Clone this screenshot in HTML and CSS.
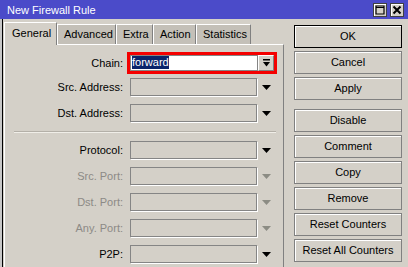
FILE: index.html
```html
<!DOCTYPE html>
<html lang="en">
<head>
    <meta charset="UTF-8">
    <title>New Firewall Rule</title>
    <link rel="stylesheet" href="styles.css">
</head>
<body>
<div class="window">
    <div class="titlebar">
        <span class="title">New Firewall Rule</span>
        <span class="tb-btn">
            <svg width="10" height="10" viewBox="0 0 10 10"><path d="M1 1h8v8h-8z M1 2.5h8" fill="none" stroke="#000" stroke-width="1.2"/></svg>
        </span>
        <span class="tb-btn">
            <svg width="10" height="10" viewBox="0 0 10 10"><path d="M1.5 1.5l7 7M8.5 1.5l-7 7" stroke="#000" stroke-width="2"/></svg>
        </span>
    </div>
    <div class="client">
        <div class="edge"></div>
        <div class="dialog">
            <div class="tabs-area">
                <div class="tabs">
                    <div class="tab active">General</div>
                    <div class="tab">Advanced</div>
                    <div class="tab">Extra</div>
                    <div class="tab">Action</div>
                    <div class="tab">Statistics</div>
                </div>
                <div class="panel">
                    <!-- chain is the focused field -->
                    <div class="row row-chain">
                        <label class="lbl">Chain:</label>
                        <div class="focus-box">
                            <div class="field field-edit"><span class="sel">forward</span></div>
                            <div class="drop-btn">
                                <svg width="7" height="8" viewBox="0 0 7 8"><rect x="0" y="0" width="7" height="1.5" fill="#000"/><polygon points="0,3 7,3 3.5,7.5" fill="#000"/></svg>
                            </div>
                        </div>
                    </div>
                    <div class="row">
                        <label class="lbl">Src. Address:</label>
                        <div class="field"></div>
                        <svg class="arrow" width="9" height="5" viewBox="0 0 9 5"><polygon points="0,0 9,0 4.5,5"/></svg>
                    </div>
                    <div class="row">
                        <label class="lbl">Dst. Address:</label>
                        <div class="field"></div>
                        <svg class="arrow" width="9" height="5" viewBox="0 0 9 5"><polygon points="0,0 9,0 4.5,5"/></svg>
                    </div>
                    <div class="sep"></div>
                    <div class="row">
                        <label class="lbl">Protocol:</label>
                        <div class="field"></div>
                        <svg class="arrow" width="9" height="5" viewBox="0 0 9 5"><polygon points="0,0 9,0 4.5,5"/></svg>
                    </div>
                    <div class="row off">
                        <label class="lbl">Src. Port:</label>
                        <div class="field"></div>
                        <svg class="arrow" width="9" height="5" viewBox="0 0 9 5"><polygon points="0,0 9,0 4.5,5"/></svg>
                    </div>
                    <div class="row off">
                        <label class="lbl">Dst. Port:</label>
                        <div class="field"></div>
                        <svg class="arrow" width="9" height="5" viewBox="0 0 9 5"><polygon points="0,0 9,0 4.5,5"/></svg>
                    </div>
                    <div class="row off">
                        <label class="lbl">Any. Port:</label>
                        <div class="field"></div>
                        <svg class="arrow" width="9" height="5" viewBox="0 0 9 5"><polygon points="0,0 9,0 4.5,5"/></svg>
                    </div>
                    <div class="row">
                        <label class="lbl">P2P:</label>
                        <div class="field"></div>
                        <svg class="arrow" width="9" height="5" viewBox="0 0 9 5"><polygon points="0,0 9,0 4.5,5"/></svg>
                    </div>
                </div>
            </div>
            <div class="buttons">
                <div class="btn default">OK</div>
                <div class="btn">Cancel</div>
                <div class="btn">Apply</div>
                <div class="btn spaced">Disable</div>
                <div class="btn">Comment</div>
                <div class="btn">Copy</div>
                <div class="btn">Remove</div>
                <div class="btn">Reset Counters</div>
                <div class="btn">Reset All Counters</div>
            </div>
        </div>
    </div>
</div>
</body>
</html>
```

FILE: styles.css
```css
* {
    margin: 0;
    padding: 0;
    box-sizing: border-box;
}

body {
    width: 408px;
    height: 267px;
    overflow: hidden;
    background: #d4d0c8;
    font-family: "Liberation Sans", Arial, sans-serif;
    font-size: 11px;
    color: #000;
}

.window {
    display: flex;
    flex-direction: column;
    height: 267px;
}

.titlebar {
    display: flex;
    align-items: center;
    height: 20px;
    background: #4b4bc9;
    padding-right: 4px;
}

.title {
    flex: 1;
    padding-left: 7px;
    color: #fff;
    font-size: 11px;
}

.tb-btn {
    display: flex;
    align-items: center;
    justify-content: center;
    width: 14px;
    height: 14px;
    margin-left: 3px;
    background: #d4d0c8;
    border: 1px solid #404040;
    box-shadow: inset 1px 1px 0 #fff;
}

.client {
    flex: 1;
    display: flex;
}

.edge {
    width: 3px;
    background: #c8c8c8;
    border-right: 1px solid #000;
}

.dialog {
    flex: 1;
    display: flex;
    padding-left: 1px;
}

/* tabs + form */
.tabs-area {
    width: 280px;
    display: flex;
    flex-direction: column;
    padding-top: 3px;
}

.tabs {
    display: flex;
    align-items: flex-end;
    height: 22px;
}

.tab {
    height: 20px;
    line-height: 19px;
    padding-left: 6px;
    background: #c4c0b8;
    border-top: 1px solid #fff;
    border-left: 1px solid #fff;
    border-right: 1px solid #808080;
    white-space: nowrap;
}

.tab:nth-child(1) { width: 53px; }
.tab:nth-child(2) { width: 59px; }
.tab:nth-child(3) { width: 37px; }
.tab:nth-child(4) { width: 43px; }
.tab:nth-child(5) { width: 55px; }

.tab.active {
    position: relative;
    z-index: 1;
    height: 23px;
    margin-bottom: -1px;
    line-height: 20px;
    padding-left: 7px;
    background: #d4d0c8;
}

.panel {
    flex: 1;
    padding-top: 6px;
    border-top: 1px solid #fff;
    border-left: 1px solid #fff;
    border-right: 1px solid #808080;
}

.row {
    display: flex;
    align-items: center;
    height: 26px;
}

.row-chain {
    height: 23px;
    align-items: flex-start;
}

.lbl {
    width: 118px;
    text-align: right;
    margin-right: 7px;
}

.row-chain .lbl {
    margin-right: 4px;
    line-height: 24px;
}

.row.off .lbl {
    color: #8c8a86;
}

.field {
    width: 127px;
    height: 18px;
    border: 1px solid #858585;
    box-shadow: 1px 1px 0 #fff;
    background: #d4d0c8;
}

.arrow {
    margin-left: 5px;
    fill: #000;
}

.row.off .arrow {
    fill: #8c8c84;
}

.focus-box {
    display: flex;
    margin-top: 1px;
    border: 3px solid #f40000;
}

.field-edit {
    width: 128px;
    height: 16px;
    background: #fff;
    box-shadow: none;
    padding-left: 1px;
    line-height: 13px;
}

.sel {
    display: inline-block;
    background: #0a246a;
    color: #fff;
    line-height: 13px;
}

.drop-btn {
    display: flex;
    align-items: center;
    justify-content: center;
    width: 16px;
    height: 16px;
    background: #d4d0c8;
    border-top: 1px solid #fff;
    border-left: 1px solid #fff;
    border-right: 1px solid #808080;
    border-bottom: 1px solid #808080;
}

.sep {
    height: 2px;
    margin: 5px 7px 4px 9px;
    border-top: 1px solid #b4b0a8;
    border-bottom: 1px solid #f0eee8;
}

/* right side buttons */
.buttons {
    display: flex;
    flex-direction: column;
    gap: 3px;
    padding-top: 6px;
    margin-left: 10px;
}

.btn {
    width: 108px;
    height: 23px;
    line-height: 21px;
    text-align: center;
    border: 1px solid #808080;
    box-shadow: inset 1px 1px 0 #fff;
    background: #d4d0c8;
}

.btn.default {
    border-color: #000;
}

.btn.spaced {
    margin-top: 6px;
}
```
